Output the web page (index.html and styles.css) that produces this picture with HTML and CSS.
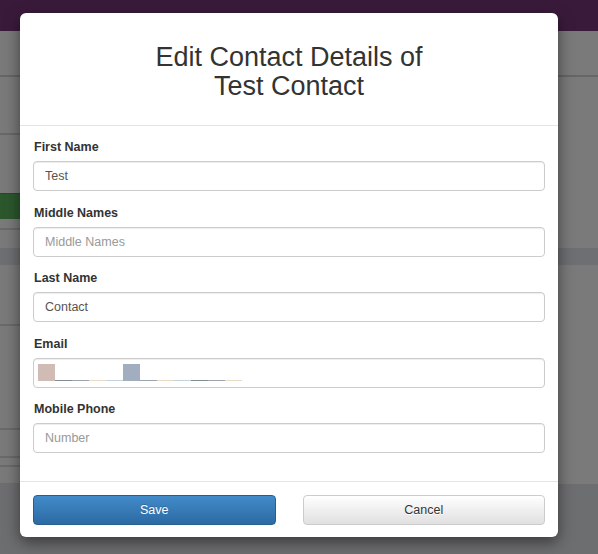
FILE: index.html
```html
<!DOCTYPE html>
<html>
<head>
<meta charset="utf-8">
<link rel="stylesheet" href="styles.css">
</head>
<body>
<div class="page">
  <div class="topbar"></div>
  <div class="content">
    <div class="side">
      <div class="band b1"></div>
      <div class="band b2"></div>
      <div class="band b3"></div>
      <div class="band green"></div>
      <div class="band b4"></div>
      <div class="band b5"></div>
      <div class="band dark"></div>
      <div class="band b6"></div>
      <div class="band b7"></div>
      <div class="band b8"></div>
      <div class="band b9"></div>
      <div class="band b10"></div>
      <div class="band bottom"></div>
    </div>
    <div class="main">
      <div class="band b1"></div>
      <div class="band m2"></div>
      <div class="band dark"></div>
      <div class="band m3"></div>
      <div class="band bottom"></div>
    </div>
  </div>
</div>

<div class="modal">
  <div class="modal-header">
    <h3 class="modal-title">Edit Contact Details of<br>Test Contact</h3>
  </div>
  <div class="modal-body">
    <div class="form-group">
      <label class="label">First Name</label>
      <input class="input" type="text" value="Test">
    </div>
    <div class="form-group">
      <label class="label">Middle Names</label>
      <input class="input" type="text" placeholder="Middle Names">
    </div>
    <div class="form-group">
      <label class="label">Last Name</label>
      <input class="input" type="text" value="Contact">
    </div>
    <div class="form-group">
      <label class="label">Email</label>
      <div class="input redacted">
        <span class="blk c1"></span><span class="ln l1"></span><span class="ln l2"></span><span class="ln l3"></span><span class="ln l4"></span><span class="blk c2"></span><span class="ln l2"></span><span class="ln l3"></span><span class="ln l4"></span><span class="ln l1"></span><span class="ln l2"></span><span class="ln l3"></span>
      </div>
    </div>
    <div class="form-group last">
      <label class="label">Mobile Phone</label>
      <input class="input" type="text" placeholder="Number">
    </div>
  </div>
  <div class="modal-footer">
    <button class="btn btn-primary">Save</button>
    <button class="btn btn-default">Cancel</button>
  </div>
</div>
</body>
</html>
```

FILE: styles.css
```css
* { box-sizing: border-box; }
html, body { margin: 0; padding: 0; }
body {
  width: 598px;
  height: 554px;
  overflow: hidden;
  font-family: "Liberation Sans", Arial, sans-serif;
  background: #6d6e70;
  position: relative;
}
.page { display: flex; flex-direction: column; height: 554px; }
.topbar { height: 31px; background: #3a1a3b; }
.content { display: flex; flex: 1; }
.side { width: 300px; display: flex; flex-direction: column; }
.main { flex: 1; display: flex; flex-direction: column; }
.band { background: #7a7a7a; }
.b1 { height: 46px; border-bottom: 2px solid #666; }
.b2 { height: 58px; border-bottom: 2px solid #686868; }
.b3 { height: 58px; }
.green { height: 26px; background: #2c572d; border-top: 1px solid #25482a; }
.b4 { height: 11px; border-bottom: 2px solid #6a6a6a; }
.b5 { height: 18px; }
.dark { height: 17px; background: #6e6f72; }
.b6 { height: 61px; border-bottom: 2px solid #6a6a6a; }
.b7 { height: 104px; border-bottom: 2px solid #6a6a6a; }
.b8 { height: 28px; border-bottom: 2px solid #6a6a6a; }
.b9 { height: 9px; border-bottom: 2px solid #6a6a6a; }
.b10 { height: 16px; }
.bottom { flex: 1; background: #6d6e70; }
.m2 { height: 171px; }
.m3 { height: 219px; }

.modal {
  position: absolute;
  left: 20px;
  top: 13px;
  width: 538px;
  background: #fff;
  border-radius: 6px;
  box-shadow: 0 5px 15px rgba(0, 0, 0, 0.5);
}
.modal-header {
  padding: 30px 15px 24px;
  border-bottom: 1px solid #e5e5e5;
  text-align: center;
}
.modal-title {
  margin: 0;
  font-size: 27px;
  line-height: 29px;
  font-weight: normal;
  color: #333;
}
.modal-body { padding: 13px 13px 0; }
.form-group { display: flex; flex-direction: column; margin-bottom: 13.5px; }
.form-group.last { margin-bottom: 28px; }
.label {
  font-size: 12.5px;
  line-height: 15px;
  font-weight: bold;
  color: #333;
  padding-top: 1px;
  margin-bottom: 6px;
  padding-left: 1px;
}
.input {
  height: 30px;
  width: 100%;
  border: 1px solid #ccc;
  border-radius: 4px;
  padding: 0 11px;
  font-family: "Liberation Sans", Arial, sans-serif;
  font-size: 12.5px;
  color: #555;
  background: #fff;
  box-shadow: inset 0 1px 1px rgba(0, 0, 0, 0.075);
  outline: none;
}
.input::placeholder { color: #999; }
.redacted {
  display: flex;
  align-items: flex-end;
  padding: 4px 4px 0;
}
.redacted span { width: 17px; display: block; margin-bottom: 6px; }
.blk { height: 17px; }
.ln { height: 1px; }
.c1 { background: #d0bcb5; }
.c2 { background: #a3adc0; }
.l1 { background: #808e94; }
.l2 { background: #9aa3af; }
.l3 { background: #e9d9c5; }
.l4 { background: #c4d2de; }

.modal-footer {
  border-top: 1px solid #e5e5e5;
  padding: 13px 13px 12px;
  display: flex;
  gap: 27px;
}
.btn {
  flex: 1;
  height: 30px;
  border-radius: 4px;
  font-family: "Liberation Sans", Arial, sans-serif;
  font-size: 12.5px;
  cursor: pointer;
  padding: 0;
}
.btn-primary {
  color: #fff;
  background: linear-gradient(#428bca, #2c6aa3);
  border: 1px solid #285e8e;
  text-shadow: 0 -1px 0 rgba(0, 0, 0, 0.2);
}
.btn-default {
  color: #333;
  background: linear-gradient(#fff, #e0e0e0);
  border: 1px solid #ccc;
  text-shadow: 0 1px 0 #fff;
}
```
